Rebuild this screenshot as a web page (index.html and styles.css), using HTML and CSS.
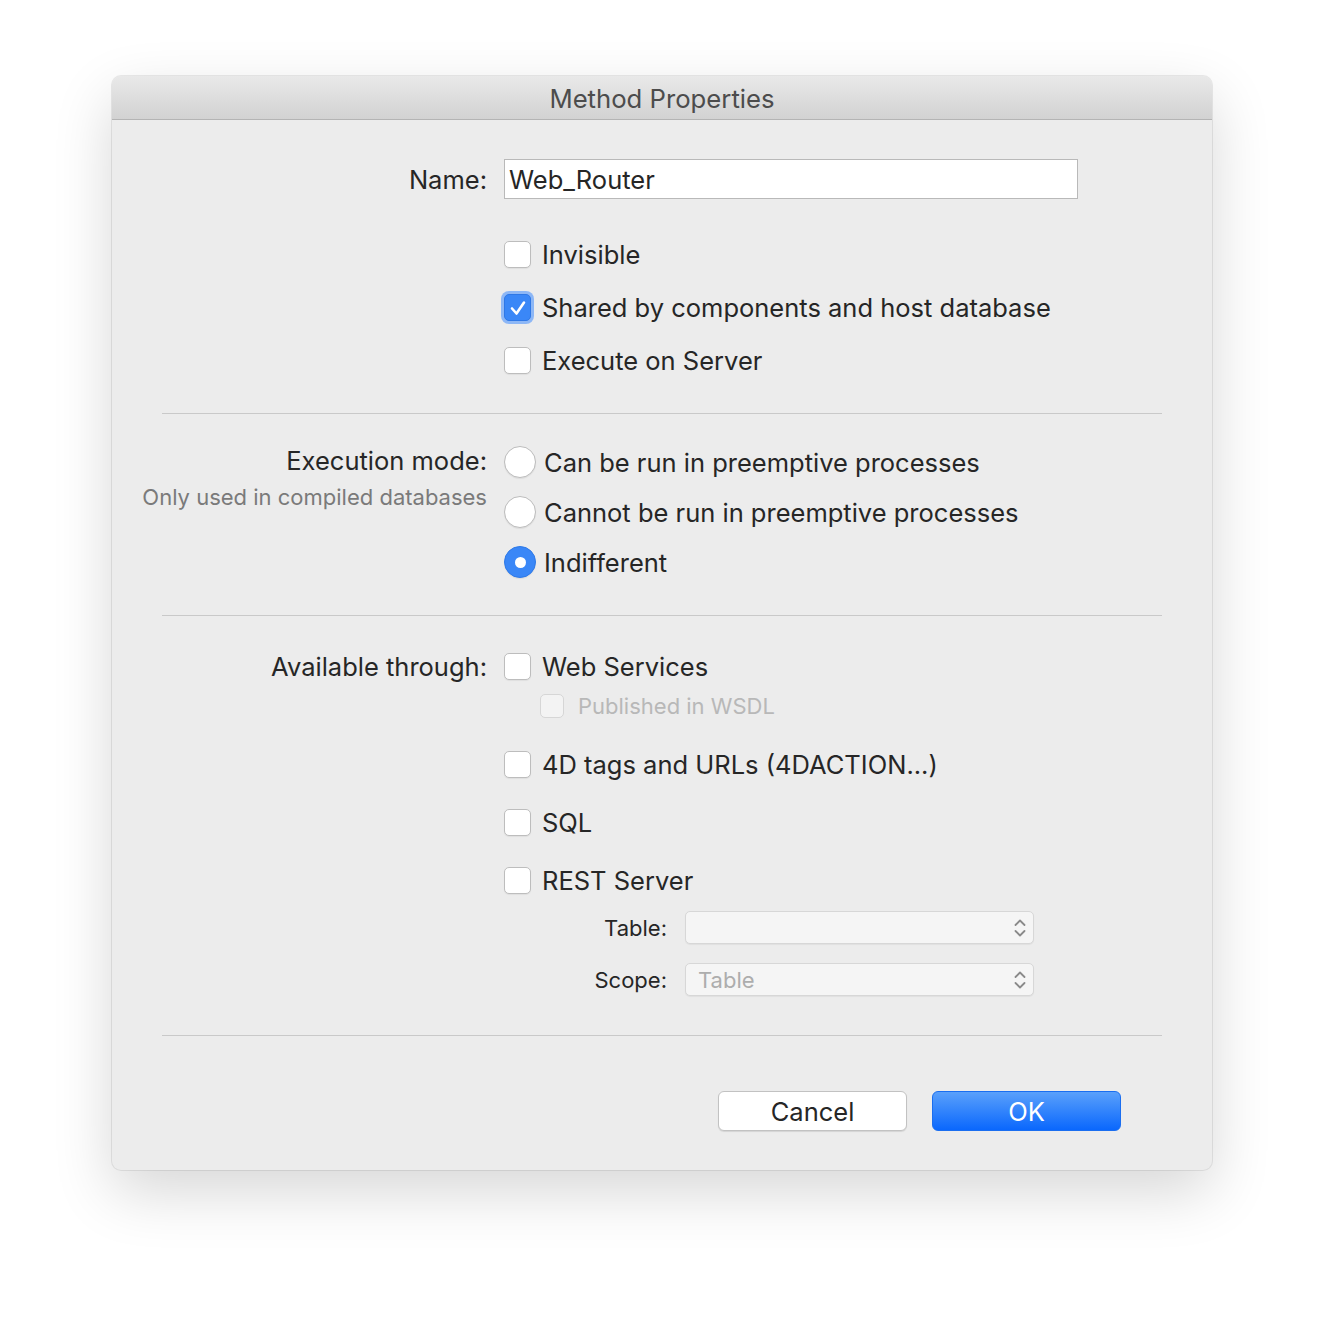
FILE: index.html
```html
<!DOCTYPE html>
<html>
<head>
<meta charset="utf-8">
<link rel="stylesheet" href="styles.css">
</head>
<body>
<div class="window">
  <div class="titlebar">Method Properties</div>
  <div class="content">
    <div class="row name-row">
      <div class="label">Name:</div>
      <div class="field"><input class="text-input" type="text" value="Web_Router"></div>
    </div>
    <div class="row cb-row">
      <div class="label"></div>
      <div class="field"><span class="cb"></span><span class="opt">Invisible</span></div>
    </div>
    <div class="row cb-row">
      <div class="label"></div>
      <div class="field"><span class="cb checked"><svg width="22" height="22" viewBox="0 0 22 22"><path d="M5 11.5 L9.5 16.5 L17 5.5" fill="none" stroke="#fff" stroke-width="2.6" stroke-linecap="round" stroke-linejoin="round"/></svg></span><span class="opt">Shared by components and host database</span></div>
    </div>
    <div class="row cb-row">
      <div class="label"></div>
      <div class="field"><span class="cb"></span><span class="opt">Execute on Server</span></div>
    </div>

    <div class="sep sep1"></div>

    <div class="radio-group">
      <div class="row radio-row">
        <div class="label label-top">
          <div>Execution mode:</div>
          <div class="sub">Only used in compiled databases</div>
        </div>
        <div class="field"><span class="radio"></span><span class="opt">Can be run in preemptive processes</span></div>
      </div>
      <div class="row radio-row">
        <div class="label"></div>
        <div class="field"><span class="radio"></span><span class="opt">Cannot be run in preemptive processes</span></div>
      </div>
      <div class="row radio-row">
        <div class="label"></div>
        <div class="field"><span class="radio on"></span><span class="opt">Indifferent</span></div>
      </div>
    </div>

    <div class="sep sep2"></div>

    <div class="row web-row">
      <div class="label">Available through:</div>
      <div class="field"><span class="cb"></span><span class="opt">Web Services</span></div>
    </div>
    <div class="row pub-row">
      <div class="label"></div>
      <div class="field sub-field"><span class="cb small disabled"></span><span class="opt disabled-text">Published in WSDL</span></div>
    </div>
    <div class="row avail-row">
      <div class="label"></div>
      <div class="field"><span class="cb"></span><span class="opt">4D tags and URLs (4DACTION...)</span></div>
    </div>
    <div class="row avail-row">
      <div class="label"></div>
      <div class="field"><span class="cb"></span><span class="opt">SQL</span></div>
    </div>
    <div class="row avail-row">
      <div class="label"></div>
      <div class="field"><span class="cb"></span><span class="opt">REST Server</span></div>
    </div>
    <div class="popup-row popup-first">
      <div class="plabel">Table:</div>
      <div class="popup"><span class="pval"></span>
        <svg class="chev" width="14" height="22" viewBox="0 0 14 22"><path d="M2.5 8 L7 3.5 L11.5 8" fill="none" stroke="#8a8a8a" stroke-width="1.8" stroke-linecap="round" stroke-linejoin="round"/><path d="M2.5 14 L7 18.5 L11.5 14" fill="none" stroke="#8a8a8a" stroke-width="1.8" stroke-linecap="round" stroke-linejoin="round"/></svg>
      </div>
    </div>
    <div class="popup-row popup-second">
      <div class="plabel">Scope:</div>
      <div class="popup"><span class="pval">Table</span>
        <svg class="chev" width="14" height="22" viewBox="0 0 14 22"><path d="M2.5 8 L7 3.5 L11.5 8" fill="none" stroke="#8a8a8a" stroke-width="1.8" stroke-linecap="round" stroke-linejoin="round"/><path d="M2.5 14 L7 18.5 L11.5 14" fill="none" stroke="#8a8a8a" stroke-width="1.8" stroke-linecap="round" stroke-linejoin="round"/></svg>
      </div>
    </div>

    <div class="sep sep3"></div>

    <div class="buttons">
      <button class="btn cancel">Cancel</button>
      <button class="btn ok">OK</button>
    </div>
  </div>
</div>
</body>
</html>
```

FILE: styles.css
```css
html, body {
  margin: 0;
  padding: 0;
  background: #ffffff;
}
body {
  font-family: "Inter", "Liberation Sans", sans-serif;
  color: #262626;
  padding: 76px 0 148px 112px;
}
.window {
  width: 1100px;
  background: #ececec;
  border-radius: 9px;
  box-shadow: 0 0 0 1px rgba(0,0,0,0.08), 0 22px 60px rgba(0,0,0,0.16);
  overflow: hidden;
}
.titlebar {
  height: 43px;
  background: linear-gradient(#e9e9e9, #d2d2d2);
  border-bottom: 1px solid #b4b4b4;
  text-align: center;
  line-height: 45px;
  font-size: 25.7px;
  color: #4c4c4c;
}
.content {
  padding: 39px 0 39px 0;
}
.row {
  display: flex;
  align-items: center;
}
.label {
  width: 375px;
  text-align: right;
  font-size: 25.5px;
  flex: none;
}
.field {
  margin-left: 17px;
  display: flex;
  align-items: center;
}
.name-row { height: 40px; }
.text-input {
  width: 574px;
  height: 40px;
  box-sizing: border-box;
  border: 1px solid #b9b9b9;
  background: #fff;
  font-family: inherit;
  font-size: 25.5px;
  color: #262626;
  padding: 0 4px;
  outline: none;
  margin: 0;
}
.cb-row { height: 53px; }
.cb-row:nth-child(2) { margin-top: 29px; }
.cb {
  width: 27px;
  height: 27px;
  box-sizing: border-box;
  border: 1px solid #bdbdbd;
  border-radius: 5px;
  background: #fff;
  box-shadow: 0 1px 1px rgba(0,0,0,0.06);
  flex: none;
  display: flex;
  align-items: center;
  justify-content: center;
}
.cb.checked {
  background: #3a87f7;
  border-color: #2f78e6;
  box-shadow: 0 0 0 3px #8db7f6;
}
.cb.small {
  width: 24px;
  height: 24px;
}
.cb.disabled {
  background: #f3f3f3;
  border-color: #d6d6d6;
  box-shadow: none;
}
.opt {
  margin-left: 11px;
  font-size: 25.5px;
  white-space: nowrap;
}
.disabled-text {
  font-size: 22px;
  color: #b8b8b8;
  margin-left: 14px;
}
.sep {
  height: 1px;
  background: #c9c9c9;
  margin: 0 50px;
}
.sep1 { margin-top: 26px; }
.radio-group { margin-top: 23px; }
.radio-row { height: 50px; align-items: center; }
.label-top {
  align-self: flex-start;
  padding-top: 9px;
  line-height: 30px;
}
.sub {
  font-size: 22px;
  color: #7a7a7a;
  margin-top: 6px;
}
.radio {
  width: 32px;
  height: 32px;
  box-sizing: border-box;
  border-radius: 50%;
  border: 1px solid #bcbcbc;
  background: #fff;
  box-shadow: 0 1px 1px rgba(0,0,0,0.07);
  flex: none;
  display: flex;
  align-items: center;
  justify-content: center;
}
.radio.on {
  background: #3a87f7;
  border-color: #2f7ae8;
}
.radio.on::after {
  content: "";
  width: 11px;
  height: 11px;
  border-radius: 50%;
  background: #fff;
}
.radio + .opt { margin-left: 8px; }
.sep2 { margin-top: 28px; }
.web-row { height: 41px; margin-top: 30px; }
.pub-row { height: 38px; }
.sub-field { margin-left: 53px; }
.avail-row { height: 58px; }
.pub-row + .avail-row { margin-top: 10px; }
.popup-row {
  display: flex;
  align-items: center;
  height: 33px;
}
.popup-first { margin-top: 2px; }
.popup-second { margin-top: 19px; }
.plabel {
  width: 555px;
  text-align: right;
  font-size: 22px;
  flex: none;
}
.popup {
  margin-left: 18px;
  width: 349px;
  height: 33px;
  box-sizing: border-box;
  border: 1px solid #d7d7d7;
  border-radius: 5px;
  background: #f5f5f5;
  box-shadow: 0 1px 1px rgba(0,0,0,0.05);
  display: flex;
  align-items: center;
  justify-content: space-between;
  padding: 0 6px 0 12px;
}
.pval {
  font-size: 22px;
  color: #adadad;
}
.sep3 { margin-top: 39px; }
.buttons {
  display: flex;
  justify-content: flex-end;
  gap: 25px;
  margin-top: 55px;
  padding-right: 91px;
}
.btn {
  width: 189px;
  height: 40px;
  border-radius: 6px;
  font-family: inherit;
  font-size: 25.5px;
  margin: 0;
  padding: 0;
}
.cancel {
  background: #fff;
  border: 1px solid #c2c2c2;
  color: #262626;
  box-shadow: 0 1px 1px rgba(0,0,0,0.1);
}
.ok {
  background: linear-gradient(#5aa0fb, #0a67fd);
  border: 1px solid #1a6ef0;
  color: #fff;
}
```
